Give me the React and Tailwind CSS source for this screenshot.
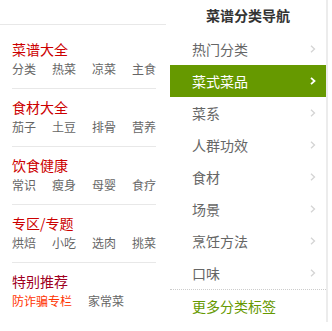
import React from "react";

const sections = [
  { title: "菜谱大全", links: ["分类", "热菜", "凉菜", "主食"] },
  { title: "食材大全", links: ["茄子", "土豆", "排骨", "营养"] },
  { title: "饮食健康", links: ["常识", "瘦身", "母婴", "食疗"] },
  { title: "专区/专题", links: ["烘焙", "小吃", "选肉", "挑菜"] },
];

const items = ["热门分类", "菜式菜品", "菜系", "人群功效", "食材", "场景", "烹饪方法", "口味"];

function Chevron({ active }) {
  return (
    <svg width="6" height="8" viewBox="0 0 6 8" className="shrink-0">
      <polyline
        points="1,0.8 4.5,4 1,7.2"
        fill="none"
        stroke={active ? "#ffffff" : "#d4d4d4"}
        strokeWidth={active ? 1.8 : 1.3}
      />
    </svg>
  );
}

export default function App() {
  return (
    <div
      className="w-[332px] h-[331px] bg-white flex overflow-hidden"
      style={{ fontFamily: '"Noto Sans CJK SC", "Noto Sans", sans-serif' }}
    >
      <div className="w-[166px] shrink-0 pt-[24px]">
        <div className="border-t border-[#e8e8e8] pl-3 pr-[10px]">
          {sections.map((s, i) => (
            <div
              key={s.title}
              className={`${i === 0 ? "pt-[14px]" : "pt-[8px]"} pb-[9px] border-b border-[#e8e8e8]`}
            >
              <div className="text-[14px] leading-[20px] text-[#c00] whitespace-nowrap">{s.title}</div>
              <div className="flex gap-4 text-[12px] leading-[20px] text-[#666] whitespace-nowrap">
                {s.links.map((l) => (
                  <span key={l} className="shrink-0">{l}</span>
                ))}
              </div>
            </div>
          ))}
          <div className="pt-[8px]">
            <div className="text-[14px] leading-[20px] text-[#a0001e] whitespace-nowrap">特别推荐</div>
            <div className="flex gap-4 text-[12px] leading-[20px] text-[#666] whitespace-nowrap">
              <span className="text-[#f30] shrink-0">防诈骗专栏</span>
              <span className="shrink-0">家常菜</span>
            </div>
          </div>
        </div>
      </div>
      <div className="w-[4px] shrink-0" />
      <div className="w-[156px] shrink-0 h-[322px] border-r-2 border-[#ececec] box-content">
        <div className="h-[33px] pt-[5px] text-center text-[14px] leading-[20px] font-bold text-[#333]">
          菜谱分类导航
        </div>
        {items.map((it, i) => {
          const active = i === 1;
          return (
            <div
              key={it}
              className={`h-[32px] flex items-center justify-between pl-[22px] pr-[10px] text-[14px] ${
                active ? "bg-[#690] text-white" : "text-[#666]"
              }`}
            >
              <span className="leading-[20px]">{it}</span>
              <Chevron active={active} />
            </div>
          );
        })}
        <div className="border-t border-dotted border-[#ccc] h-[33px] flex items-center pl-[22px] text-[14px] text-[#690]">
          <span className="leading-[20px]">更多分类标签</span>
        </div>
      </div>
    </div>
  );
}
